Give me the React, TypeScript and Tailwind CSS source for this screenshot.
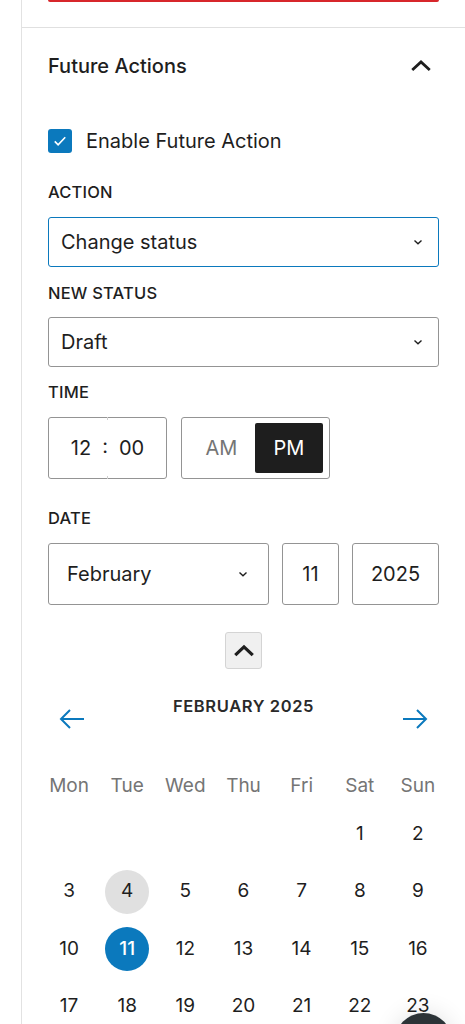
import React from 'react'

const weekdays = ['Mon', 'Tue', 'Wed', 'Thu', 'Fri', 'Sat', 'Sun']

// February 2025 starts on a Saturday
const days: (number | null)[] = [null, null, null, null, null, 1, 2, ...Array.from({ length: 21 }, (_, i) => i + 3)]

function ChevronDown() {
  return (
    <svg width="14" height="14" viewBox="0 0 24 24" fill="none" stroke="#1e1e1e" strokeWidth="2.4">
      <path d="M6 9.5l6 5.5 6-5.5" />
    </svg>
  )
}

function ChevronUp({ size = 28, stroke = 2.4 }: { size?: number; stroke?: number }) {
  return (
    <svg width={size} height={size} viewBox="0 0 24 24" fill="none" stroke="#1e1e1e" strokeWidth={stroke}>
      <path d="M4.5 15.5L12 8.5l7.5 7" />
    </svg>
  )
}

function Arrow({ dir }: { dir: 'left' | 'right' }) {
  return (
    <svg width="28" height="28" viewBox="0 0 28 28" fill="none" stroke="#0b79bd" strokeWidth="2">
      {dir === 'left' ? <path d="M26 14H3M12 5l-9 9 9 9" /> : <path d="M2 14h23M16 5l9 9-9 9" />}
    </svg>
  )
}

function Label({ children }: { children: React.ReactNode }) {
  return <div className="text-[16.5px] font-medium uppercase leading-5 tracking-[0.2px] text-[#1e1e1e]">{children}</div>
}

function Select({ value, focused }: { value: string; focused?: boolean }) {
  return (
    <div
      className={
        'flex h-[50px] items-center justify-between rounded-[3px] pl-[12px] pr-[13px] text-[20px] text-[#1e1e1e] ' +
        (focused ? 'border-[1.5px] border-[#0b79bd]' : 'border border-[#949494]')
      }
    >
      <span>{value}</span>
      <ChevronDown />
    </div>
  )
}

export default function App() {
  return (
    <div className="relative h-[1024px] w-[465px] overflow-hidden bg-white font-['Inter',sans-serif] text-[#1e1e1e]">
      <div className="ml-[21px] h-full border-l-[1.5px] border-[#e2e2e2]">
        <div className="h-[28px] border-b border-[#e0e0e0] px-[26px]">
          <div className="h-[2px] rounded-b-[2px] bg-[#d7262b]" />
        </div>

        <div className="flex flex-col px-[26px] pt-[26px]">
          <div className="flex h-[24px] items-center justify-between">
            <span className="text-[20px] font-medium">Future Actions</span>
            <span className="mr-[4px]">
              <ChevronUp />
            </span>
          </div>

          <label className="mt-[48px] flex items-center gap-[14px]">
            <span className="flex h-[24px] w-[24px] items-center justify-center rounded-[3px] bg-[#0b79bd]">
              <svg width="18" height="18" viewBox="0 0 24 24" fill="none" stroke="white" strokeWidth="2.2">
                <path d="M5 12.5l4.5 4.5L19 7" />
              </svg>
            </span>
            <span className="text-[20px]">Enable Future Action</span>
          </label>

          <div className="mt-[26px]">
            <Label>Action</Label>
          </div>
          <div className="mt-[15px]">
            <Select value="Change status" focused />
          </div>

          <div className="mt-[16px]">
            <Label>New Status</Label>
          </div>
          <div className="mt-[14px]">
            <Select value="Draft" />
          </div>

          <div className="mt-[15px]">
            <Label>Time</Label>
          </div>
          <div className="mt-[15px] flex gap-[14px]">
            <div className="relative flex h-[62px] w-[119px] items-center justify-center gap-[11px] rounded-[3px] border border-[#949494] text-[20px]">
              <span className="absolute top-[-1px] left-[58px] h-[3px] w-[1px] bg-[#cfcfcf]" />
              <span className="absolute bottom-[-1px] left-[58px] h-[3px] w-[1px] bg-[#cfcfcf]" />
              <span>12</span>
              <span className="-mt-[4px]">:</span>
              <span>00</span>
            </div>
            <div className="flex h-[62px] w-[149px] items-center rounded-[3px] border border-[#949494] p-[6px] text-[20px]">
              <span className="flex h-[50px] flex-1 items-center justify-center text-[#757575]">AM</span>
              <span className="flex h-[50px] w-[68px] items-center justify-center rounded-[2px] bg-[#1e1e1e] text-white">PM</span>
            </div>
          </div>

          <div className="mt-[29px]">
            <Label>Date</Label>
          </div>
          <div className="mt-[15px] flex gap-[13px] text-[20px]">
            <div className="flex h-[62px] w-[221px] items-center justify-between rounded-[3px] border border-[#949494] pl-[18px] pr-[18px]">
              <span>February</span>
              <ChevronDown />
            </div>
            <div className="flex h-[62px] w-[57px] items-center justify-center rounded-[3px] border border-[#949494]">11</div>
            <div className="flex h-[62px] flex-1 items-center justify-center rounded-[3px] border border-[#949494]">2025</div>
          </div>

          <div className="mt-[27px] flex justify-center">
            <div className="flex h-[37px] w-[37px] items-center justify-center rounded-[3px] border border-[#d4d4d4] bg-[#f0f0f0]">
              <ChevronUp size={28} stroke={2.8} />
            </div>
          </div>

          <div className="mt-[25px] flex items-start justify-between px-[10px]">
            <span className="mt-[11px]">
              <Arrow dir="left" />
            </span>
            <span className="text-[16.5px] font-semibold tracking-[0.6px] text-[#2a2a2a]">FEBRUARY 2025</span>
            <span className="mt-[11px]">
              <Arrow dir="right" />
            </span>
          </div>

          <div className="mx-[-8px] mt-[40px] grid grid-cols-7 text-center text-[19px]">
            {weekdays.map((d) => (
              <div key={d} className="h-[26px] leading-[26px] text-[#757575]">
                {d}
              </div>
            ))}
          </div>
          <div className="mx-[-8px] mt-[13px] grid grid-cols-7 gap-y-[13.5px] text-center text-[19px]">
            {days.map((d, i) => (
              <div key={i} className="flex h-[44px] items-center justify-center">
                {d !== null && (
                  <span
                    className={
                      'flex h-[44px] w-[44px] items-center justify-center rounded-full ' +
                      (d === 4 ? 'bg-[#e0e0e0]' : d === 11 ? 'bg-[#0b79bd] font-medium text-white' : '')
                    }
                  >
                    {d}
                  </span>
                )}
              </div>
            ))}
          </div>
        </div>
      </div>

      <div className="absolute top-[1013px] left-[395px] h-[57px] w-[57px] rounded-full bg-[#2c3337] shadow-[0_0_24px_rgba(0,0,0,0.12)]" />
    </div>
  )
}
